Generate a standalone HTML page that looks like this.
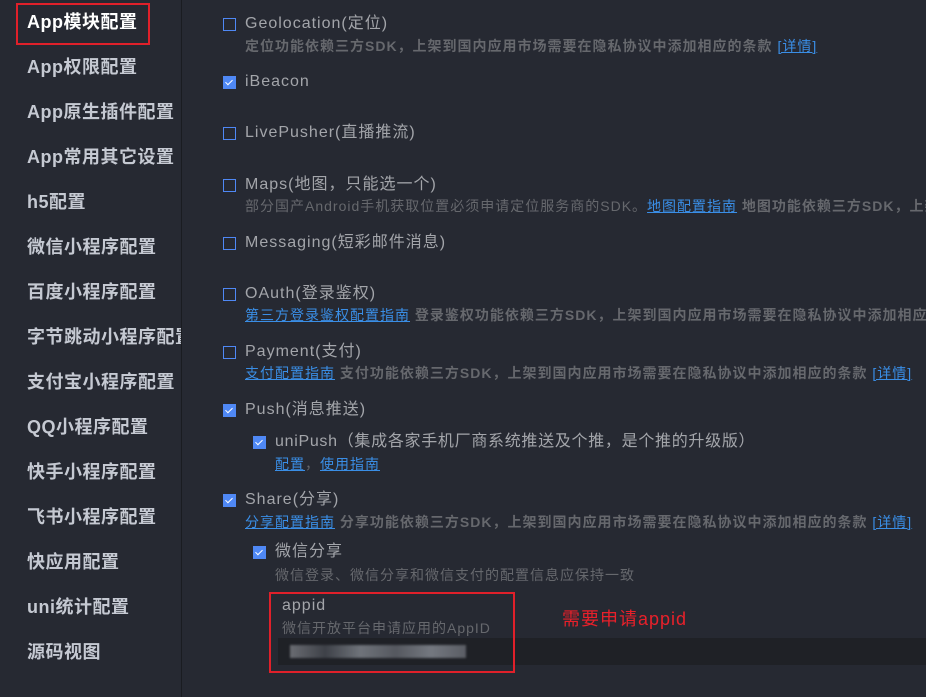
<!DOCTYPE html>
<html><head><meta charset="utf-8"><style>
*{margin:0;padding:0;box-sizing:border-box}
html,body{width:926px;height:697px;overflow:hidden}
body{background:#262932;position:relative;font-family:"Liberation Sans","Noto Sans CJK SC",sans-serif}
.main{position:absolute;left:0;top:0;width:926px;height:697px;overflow:hidden}
.side{position:absolute;left:0;top:0;width:182px;height:697px;background:#262932;border-right:1px solid #1a1c21;overflow:hidden}
.si{position:absolute;left:27px;font-size:18px;font-weight:bold;color:#c5c9d2;white-space:nowrap;line-height:24px;letter-spacing:0.5px}
.act{color:#fff}
.redbox{position:absolute;left:16px;top:3px;width:134px;height:42px;border:2px solid #e0202a}
.t{position:absolute;font-size:16px;color:#a3a5aa;white-space:nowrap;line-height:20px;letter-spacing:1px}
.d{position:absolute;font-size:14px;font-weight:bold;color:#66686d;white-space:nowrap;line-height:18px;letter-spacing:1px}
.d2{font-weight:normal}
.a{color:#3a8ee6;text-decoration:underline;font-weight:normal}
.cb{position:absolute;width:13px;height:13px;border:1.5px solid #4f88f5}
.ck{background:#4f88f5}
.ck::after{content:"";position:absolute;left:3px;top:1px;width:3px;height:6px;border:solid #fff;border-width:0 1.5px 1.5px 0;transform:rotate(45deg)}
</style></head><body>
<div class="main">
<div class="cb" style="left:223px;top:18px"></div>
<div class="t" style="left:245px;top:14px">Geolocation(定位)</div>
<div class="d" style="left:245px;top:37px">定位功能依赖三方SDK，上架到国内应用市场需要在隐私协议中添加相应的条款 <span class="a">[详情]</span></div>

<div class="cb ck" style="left:223px;top:76px"></div>
<div class="t" style="left:245px;top:72px">iBeacon</div>

<div class="cb" style="left:223px;top:127px"></div>
<div class="t" style="left:245px;top:123px">LivePusher(直播推流)</div>

<div class="cb" style="left:223px;top:179px"></div>
<div class="t" style="left:245px;top:175px">Maps(地图，只能选一个)</div>
<div class="d" style="left:245px;top:197px"><span class="d2">部分国产Android手机获取位置必须申请定位服务商的SDK。</span><span class="a">地图配置指南</span> 地图功能依赖三方SDK，上架到国内应用市场需要在隐私协议中添加相应的条款</div>

<div class="cb" style="left:223px;top:237px"></div>
<div class="t" style="left:245px;top:233px">Messaging(短彩邮件消息)</div>

<div class="cb" style="left:223px;top:288px"></div>
<div class="t" style="left:245px;top:284px">OAuth(登录鉴权)</div>
<div class="d" style="left:245px;top:306px"><span class="a">第三方登录鉴权配置指南</span> 登录鉴权功能依赖三方SDK，上架到国内应用市场需要在隐私协议中添加相应的条款</div>

<div class="cb" style="left:223px;top:346px"></div>
<div class="t" style="left:245px;top:342px">Payment(支付)</div>
<div class="d" style="left:245px;top:364px"><span class="a">支付配置指南</span> 支付功能依赖三方SDK，上架到国内应用市场需要在隐私协议中添加相应的条款 <span class="a">[详情]</span></div>

<div class="cb ck" style="left:223px;top:404px"></div>
<div class="t" style="left:245px;top:400px">Push(消息推送)</div>

<div class="cb ck" style="left:253px;top:436px"></div>
<div class="t" style="left:275px;top:432px;letter-spacing:0.7px">uniPush（集成各家手机厂商系统推送及个推，是个推的升级版）</div>
<div class="d" style="left:275px;top:455px"><span class="a">配置</span><span class="d2">，</span><span class="a">使用指南</span></div>

<div class="cb ck" style="left:223px;top:494px"></div>
<div class="t" style="left:245px;top:490px">Share(分享)</div>
<div class="d" style="left:245px;top:513px"><span class="a">分享配置指南</span> 分享功能依赖三方SDK，上架到国内应用市场需要在隐私协议中添加相应的条款 <span class="a">[详情]</span></div>

<div class="cb ck" style="left:253px;top:546px"></div>
<div class="t" style="left:275px;top:542px">微信分享</div>
<div class="d d2" style="left:275px;top:566px">微信登录、微信分享和微信支付的配置信息应保持一致</div>

<div class="t" style="left:282px;top:596px">appid</div>
<div class="d d2" style="left:282px;top:619px">微信开放平台申请应用的AppID</div>
<div style="position:absolute;left:278px;top:638px;width:648px;height:27px;background:#1f2126"></div>
<div style="position:absolute;left:290px;top:645px;width:176px;height:13px;background:linear-gradient(90deg,#6a6c72,#3e4148 20%,#6f737a 40%,#55585f 60%,#747880 80%,#5a5d64);filter:blur(1px)"></div>
<div style="position:absolute;left:269px;top:592px;width:246px;height:81px;border:2px solid #e0202a"></div>
<div style="position:absolute;left:562px;top:605px;font-size:18px;color:#e8202a;white-space:nowrap;letter-spacing:1px">需要申请appid</div>
</div>
<div class="side">
<div class="si act" style="top:10px">App模块配置</div>
<div class="si" style="top:55px">App权限配置</div>
<div class="si" style="top:100px">App原生插件配置</div>
<div class="si" style="top:145px">App常用其它设置</div>
<div class="si" style="top:190px">h5配置</div>
<div class="si" style="top:235px">微信小程序配置</div>
<div class="si" style="top:280px">百度小程序配置</div>
<div class="si" style="top:325px">字节跳动小程序配置</div>
<div class="si" style="top:370px">支付宝小程序配置</div>
<div class="si" style="top:415px">QQ小程序配置</div>
<div class="si" style="top:460px">快手小程序配置</div>
<div class="si" style="top:505px">飞书小程序配置</div>
<div class="si" style="top:550px">快应用配置</div>
<div class="si" style="top:595px">uni统计配置</div>
<div class="si" style="top:640px">源码视图</div>
</div>
<div class="redbox"></div>
</body></html>
